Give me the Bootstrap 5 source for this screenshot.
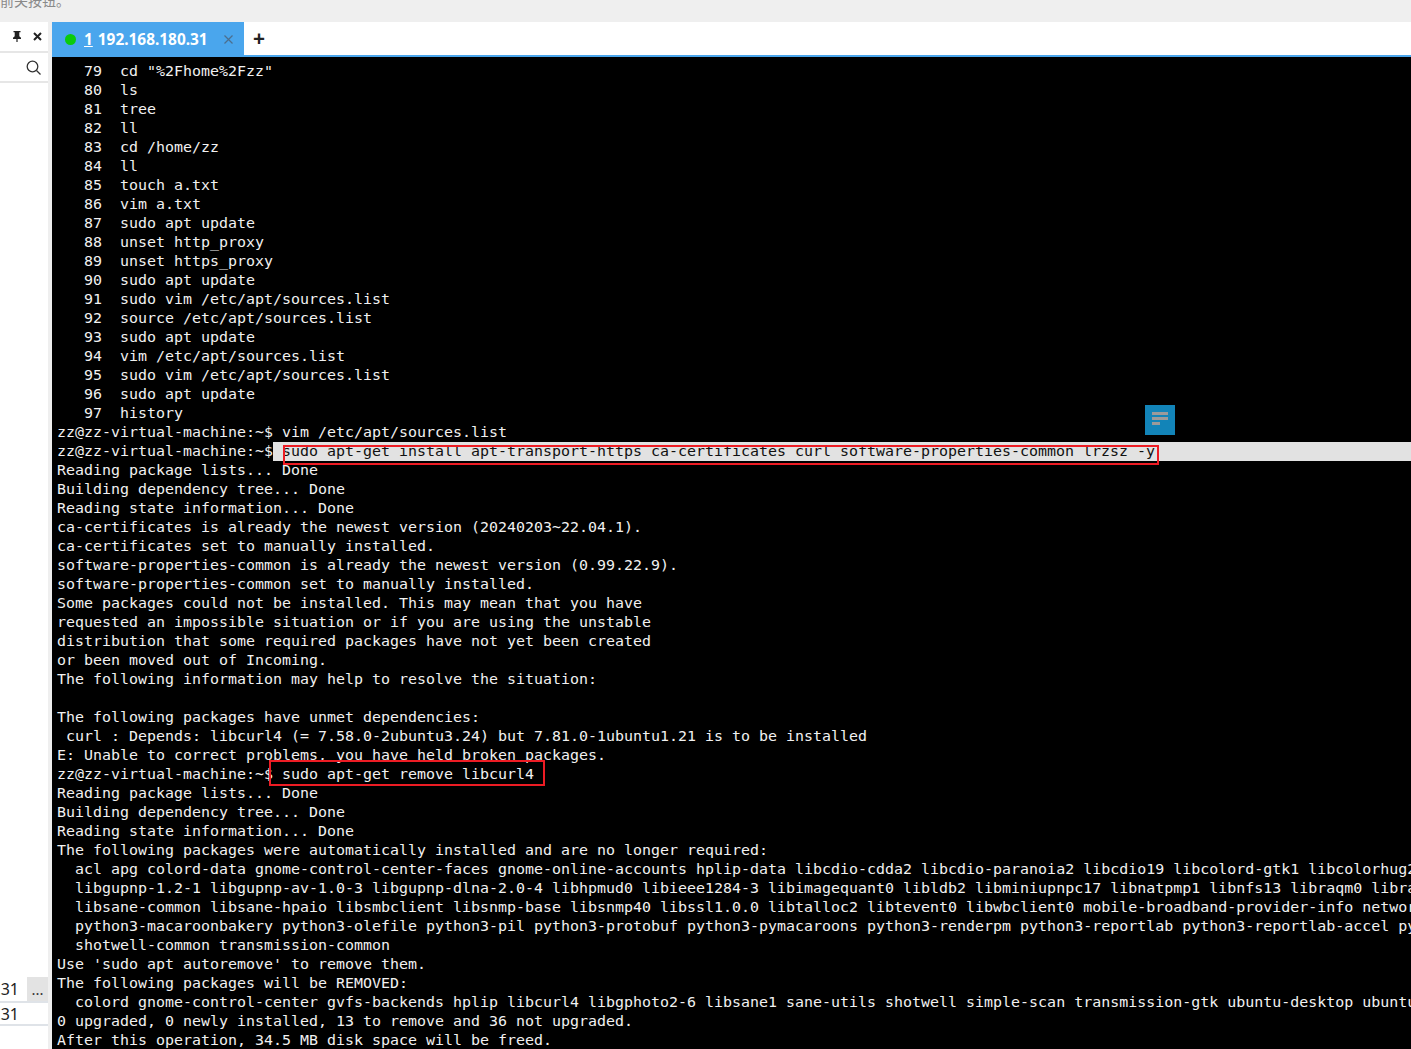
<!DOCTYPE html>
<html lang="zh"><head><meta charset="utf-8"><title>Terminal</title>
<link href="https://cdn.jsdelivr.net/npm/bootstrap@5.3.0/dist/css/bootstrap.min.css" rel="stylesheet">
<style>
html,body{height:1049px;overflow:hidden;background:#efefef}
.notice{height:22px;overflow:hidden;background:#efefef;color:#8a8a8a;font:14px/14px "Noto Sans CJK SC",sans-serif}
.notice span{display:block;margin-top:-7px}
.app{height:1027px}
.side{width:48px;margin-right:4px;background:#fff}
.side-head{height:31px;border-bottom:2px solid #e6e6e6;padding:0 6px 0 12px}
.side-search{height:30px;border-bottom:2px solid #e6e6e6;padding-right:7px}
.side-fill{height:894px}
.ip-row{height:26px;border-bottom:2px solid #dfe3e8;font:16px/24px "Noto Sans",sans-serif;color:#222}
.ip-row.ip-last{height:23px;line-height:22px}
.ip-clip{width:27px;overflow:hidden;white-space:nowrap;padding-right:8px}
.ip-more{width:21px;background:#e3e3e3;font:400 15px/25px "Noto Sans",sans-serif;text-align:center;color:#333}
.main{min-width:0}
.tabbar{height:35px;background:#fff;border-bottom:2px solid #4aa6ed}
.tabx{width:192px;height:33px;padding:2px 0 0 13px;background:#4aa6ed;color:#fff;font:700 15.4px/31px "Noto Sans",sans-serif}
.dot{width:11px;height:11px;border-radius:50%;background:#0bcb0b;margin-right:8px}
.tab-num{text-decoration:underline;margin-right:5px}
.tab-close{margin-left:16px}
.tab-new{color:#222;font:700 21px/33px "Noto Sans",sans-serif;margin-left:9px}
.term{position:relative;height:992px;background:#000;overflow:hidden;padding:5px 0 0 5px;color:#f1f1f1;font:14.95px/19px "DejaVu Sans Mono",monospace;letter-spacing:.008px;white-space:pre}
.tl{height:19px}
.sel{background:#e2e2e2;color:#111;margin-left:216px;margin-right:-5px;display:block}
.rbox{position:absolute;border:2px solid #ed1c24}
.rb1{left:231px;top:388px;width:876px;height:20px}
.rb2{left:217px;top:703px;width:276px;height:26px}
.float-btn{position:absolute;left:1093px;top:348px;width:30px;height:30px;background:#1284b8;padding:7px 7px 7px 7px}
.float-btn i{display:block;height:3px;background:#9a9a9a;margin-bottom:2px}
</style></head>
<body>
<div class="notice"><span>前关按钮。</span></div>
<div class="app d-flex">
  <div class="side flex-shrink-0">
    <div class="side-head d-flex align-items-center justify-content-between">
      <svg width="10" height="11" viewBox="0 0 10 11"><path d="M1.500 0h7v1.300H7.300v4l1.700 1.500v1.200H5.600v3H4.400v-3H1V6.800l1.700-1.500v-4H1.500z" fill="#222"/></svg>
      <svg width="9" height="9" viewBox="0 0 9 9"><path d="M1 1l7 7M8 1l-7 7" stroke="#222" stroke-width="2"/></svg>
    </div>
    <div class="side-search d-flex align-items-center justify-content-end">
      <svg width="15" height="15" viewBox="0 0 15 15" fill="none" stroke="#333" stroke-width="1.300"><circle cx="6.500" cy="6.500" r="5.300"/><path d="M10.500 10.500l4 4"/></svg>
    </div>
    <div class="side-fill"></div>
    <div class="ip-row d-flex"><div class="ip-clip d-flex justify-content-end"><span>192.168.180.31</span></div><div class="ip-more">...</div></div>
    <div class="ip-row ip-last d-flex"><div class="ip-clip d-flex justify-content-end"><span>192.168.180.31</span></div></div>
  </div>
  <div class="main flex-grow-1">
    <div class="tabbar d-flex">
      <div class="tabx d-flex align-items-center"><span class="dot"></span><span class="tab-num">1</span>192.168.180.31<svg class="tab-close" width="9" height="9" viewBox="0 0 9 9"><path d="M.5.500l8 8M8.500.500l-8 8" stroke="#4c6f8e" stroke-width="1.200"/></svg></div>
      <div class="tab-new">+</div>
    </div>
    <div class="term"><div class="tl">   79  cd "%2Fhome%2Fzz"</div><div class="tl">   80  ls</div><div class="tl">   81  tree</div><div class="tl">   82  ll</div><div class="tl">   83  cd /home/zz</div><div class="tl">   84  ll</div><div class="tl">   85  touch a.txt</div><div class="tl">   86  vim a.txt</div><div class="tl">   87  sudo apt update</div><div class="tl">   88  unset http_proxy</div><div class="tl">   89  unset https_proxy</div><div class="tl">   90  sudo apt update</div><div class="tl">   91  sudo vim /etc/apt/sources.list</div><div class="tl">   92  source /etc/apt/sources.list</div><div class="tl">   93  sudo apt update</div><div class="tl">   94  vim /etc/apt/sources.list</div><div class="tl">   95  sudo vim /etc/apt/sources.list</div><div class="tl">   96  sudo apt update</div><div class="tl">   97  history</div><div class="tl">zz@zz-virtual-machine:~$ vim /etc/apt/sources.list</div><div class="tl position-relative">zz@zz-virtual-machine:~$<span class="sel position-absolute top-0 start-0 end-0"> sudo apt-get install apt-transport-https ca-certificates curl software-properties-common lrzsz -y</span></div><div class="tl">Reading package lists... Done</div><div class="tl">Building dependency tree... Done</div><div class="tl">Reading state information... Done</div><div class="tl">ca-certificates is already the newest version (20240203~22.04.1).</div><div class="tl">ca-certificates set to manually installed.</div><div class="tl">software-properties-common is already the newest version (0.99.22.9).</div><div class="tl">software-properties-common set to manually installed.</div><div class="tl">Some packages could not be installed. This may mean that you have</div><div class="tl">requested an impossible situation or if you are using the unstable</div><div class="tl">distribution that some required packages have not yet been created</div><div class="tl">or been moved out of Incoming.</div><div class="tl">The following information may help to resolve the situation:</div><div class="tl"> </div><div class="tl">The following packages have unmet dependencies:</div><div class="tl"> curl : Depends: libcurl4 (= 7.58.0-2ubuntu3.24) but 7.81.0-1ubuntu1.21 is to be installed</div><div class="tl">E: Unable to correct problems, you have held broken packages.</div><div class="tl">zz@zz-virtual-machine:~$ sudo apt-get remove libcurl4</div><div class="tl">Reading package lists... Done</div><div class="tl">Building dependency tree... Done</div><div class="tl">Reading state information... Done</div><div class="tl">The following packages were automatically installed and are no longer required:</div><div class="tl">  acl apg colord-data gnome-control-center-faces gnome-online-accounts hplip-data libcdio-cdda2 libcdio-paranoia2 libcdio19 libcolord-gtk1 libcolorhug2 libexif12</div><div class="tl">  libgupnp-1.2-1 libgupnp-av-1.0-3 libgupnp-dlna-2.0-4 libhpmud0 libieee1284-3 libimagequant0 libldb2 libminiupnpc17 libnatpmp1 libnfs13 libraqm0 libraw20</div><div class="tl">  libsane-common libsane-hpaio libsmbclient libsnmp-base libsnmp40 libssl1.0.0 libtalloc2 libtevent0 libwbclient0 mobile-broadband-provider-info network</div><div class="tl">  python3-macaroonbakery python3-olefile python3-pil python3-protobuf python3-pymacaroons python3-renderpm python3-reportlab python3-reportlab-accel python3</div><div class="tl">  shotwell-common transmission-common</div><div class="tl">Use 'sudo apt autoremove' to remove them.</div><div class="tl">The following packages will be REMOVED:</div><div class="tl">  colord gnome-control-center gvfs-backends hplip libcurl4 libgphoto2-6 libsane1 sane-utils shotwell simple-scan transmission-gtk ubuntu-desktop ubuntu-desktop</div><div class="tl">0 upgraded, 0 newly installed, 13 to remove and 36 not upgraded.</div><div class="tl">After this operation, 34.5 MB disk space will be freed.</div>
      <div class="rbox rb1"></div><div class="rbox rb2"></div>
      <div class="float-btn"><i></i><i></i><i class="w-50"></i></div>
    </div>
  </div>
</div>
<script src="https://cdn.jsdelivr.net/npm/bootstrap@5.3.0/dist/js/bootstrap.bundle.min.js"></script>
</body></html>
